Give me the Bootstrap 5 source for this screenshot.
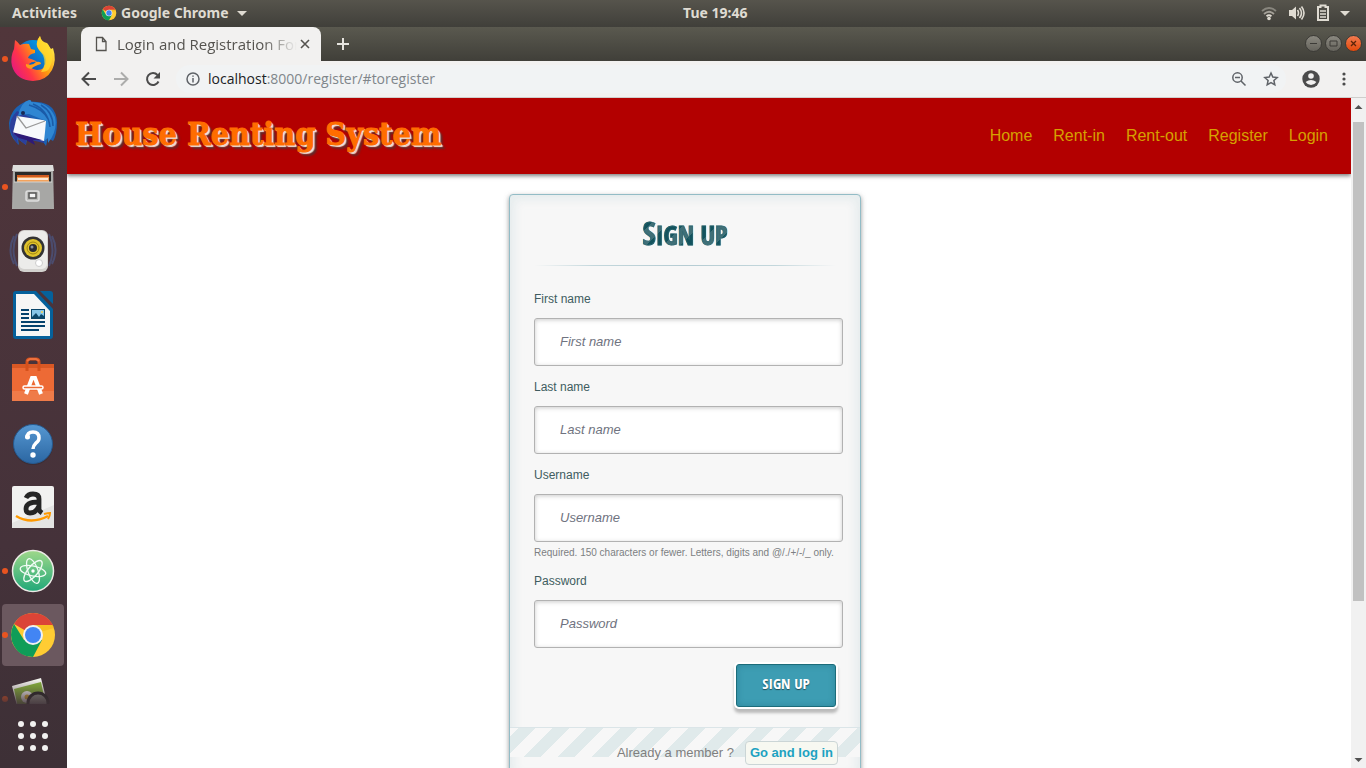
<!DOCTYPE html>
<html lang="en">
<head>
<meta charset="utf-8">
<meta name="viewport" content="width=device-width, initial-scale=1">
<title>Login and Registration Form</title>
<link rel="stylesheet" href="https://cdn.jsdelivr.net/npm/bootstrap@5.3.0/dist/css/bootstrap.min.css">
<style>
  body { font-family: "Liberation Sans", Arial, sans-serif; font-size: 13px; background: #fff; }
  svg { display: block; flex: none; }
  button { border: 0; padding: 0; background: none; color: inherit; }

  /* desktop panel */
  .panel-top { height: 27px; background: linear-gradient(#56544c, #403f3a); color: #dfdbd2; font: bold 14px/26px "Noto Sans", sans-serif; }
  .panel-top button { font: inherit; }
  .tray { gap: 11px; }
  .tri { border: 5px solid transparent; border-top-color: #dfdbd2; border-bottom: 0; }

  /* launcher */
  .launcher { width: 67px; background: linear-gradient(#51363b, #45323a 70%, #3d3036); }
  .launcher-list { flex: 1 1 0; min-height: 0; }
  .launcher-item { position: relative; width: 62px; height: 62px; margin: 1px 0 1px 2px; flex: none; border-radius: 4px; }
  .launcher-item.open { background: #6b585f; }
  .launcher-item.running::before { content: ""; position: absolute; left: 0; top: 28px; width: 6px; height: 6px; border-radius: 50%; background: #e95420; }
  .launcher-item.fading { -webkit-mask-image: linear-gradient(#000 12px, transparent 40px); mask-image: linear-gradient(#000 12px, transparent 40px); }

  /* browser window */
  .tabstrip { height: 34px; padding-left: 14px; background: linear-gradient(#5a594f, #403f39); }
  .tab-page { width: 240px; padding: 0 10px 0 12px; border-radius: 8px 8px 0 0; background: #f2f1f0; color: #55534f; font: 15px/34px "Open Sans", sans-serif; }
  .tab-name { -webkit-mask-image: linear-gradient(90deg, #000 145px, transparent 180px); mask-image: linear-gradient(90deg, #000 145px, transparent 180px); }
  .win-btns { gap: 3px; margin-right: 4px; }
  .win-btn { width: 17px; height: 17px; border-radius: 50%; background: linear-gradient(#8b8980, #65635c); border: 1px solid #3c3b37; }
  .win-btn.close-btn { background: linear-gradient(#f37b50, #e2490b); }
  .toolbar { height: 38px; padding: 0 14px 0 13px; background: #f2f1f0; border-bottom: 1px solid #cfcecc; color: #4b4b4b; }
  .nav-btns { gap: 15px; }
  .address { height: 28px; margin-left: 14px; padding: 0 7px 0 10px; border-radius: 14px; background: #f1f3f4; color: #80868b; font: 14px/28px "Open Sans", sans-serif; }
  .address b { font-weight: 400; color: #202124; }
  .scroller { width: 15px; background: #f1f1f1; }
  .scroller .track { flex: 1 1 0; padding: 8px 2px 0; }
  .scroller .thumb { height: 76%; background: #c1c1c1; }
  .scroller button { height: 16px; }

  /* site */
  .site-head { height: 76px; padding: 0 23px 0 8px; background: #b30000; box-shadow: 0 2px 4px rgba(0,0,0,.5); }
  .site-name { padding-bottom: 4px; font: bold 32px/60px "DejaVu Serif Condensed", "DejaVu Serif", serif; color: #ff6d00; -webkit-text-stroke: 1px #ff6d00; text-decoration: none; text-shadow: 1px 1px 0 #efe6da, 2px 2px 1px #efe6da, 4px 4px 2px rgba(60,60,60,.7); }
  .site-links { gap: 21px; font-size: 16px; }
  .site-links a { color: #d6a100; text-decoration: none; }
  .site-main { padding: 20px 48px 0 0; }
  .form-box { width: 352px; border: 1px solid #93bcc6; border-radius: 4px; background: #f7f7f7; box-shadow: 0 2px 5px rgba(105,108,109,.7), inset 0 0 8px 5px rgba(208,223,226,.4); }
  .form-box form { padding: 20px 17px 20px 24px; }
  .form-box h1 { margin: 0 7px 0 0; font: bold 26px/36px "Open Sans Condensed", sans-serif; text-transform: uppercase; }
  .form-box h1 span { display: inline-block; background: repeating-linear-gradient(135deg, #12535d 0 12px, #407078 12px 24px); -webkit-background-clip: text; background-clip: text; color: transparent; -webkit-text-stroke: 1px rgba(40,98,108,.6); }
  .form-box h1 span::first-letter { font-size: 32px; }
  .rule { height: 1px; margin: 12px 7px 24px 0; background: linear-gradient(90deg, transparent 0, #c3d7dc 20%, #b5ccd3 50%, #c3d7dc 80%, transparent 100%); }
  .field { margin-bottom: 12px; }
  .field label { display: block; margin-bottom: 10px; font-size: 12px; line-height: 18px; color: #405c60; }
  .field .form-control { height: 48px; padding: 0 25px; border: 1px solid #b2b2b2; border-radius: 3px; background: #fff; font-size: 13px; box-shadow: inset 0 1px 4px rgba(168,168,168,.6); }
  .field .form-control::placeholder { font-style: italic; color: #6f7380; }
  .hint { margin-top: 4px; font-size: 10px; line-height: 14px; color: #7c7f82; }
  .signup-btn { width: 100px; height: 43px; margin: 4px 7px 0 0; border: 1px solid #1c6c7a; border-radius: 3px; background: #3d9db3; color: #fff; font: bold 15px/36px "Open Sans Condensed", sans-serif; padding-bottom: 5px; text-shadow: 0 1px 1px rgba(0,0,0,.5); box-shadow: 0 0 0 2px #fff, 0 4px 3px 2px #bbb, inset 0 0 6px rgba(20,90,110,.35); }
  .form-foot { padding: 13px 22px 14px 0; border-top: 1px solid #dbe5e8; background: repeating-linear-gradient(135deg, #f7f7f7 0 6px, #e0eaeb 6px 18px, #f7f7f7 18px 24px) top / 100% 29px no-repeat; color: #7f7f7f; line-height: 22px; }
  .form-foot a { padding: 0 4px; margin-left: 11px; border: 1px solid #cbd5d6; border-radius: 4px; background: #f7f8f1; color: #1da2c1; font-weight: bold; text-decoration: none; }
</style>
</head>
<body class="d-flex flex-column vh-100 overflow-hidden">

<header class="panel-top d-flex align-items-center">
  <div class="w-50 ps-2 d-flex align-items-center">
    <button class="px-1">Activities</button>
    <button class="d-flex align-items-center ms-3 ps-1">
      <svg width="16" height="16" viewBox="0 0 48 48"><use href="#chrome"/></svg>
      <span class="mx-1">Google Chrome</span><span class="tri ms-1"></span>
    </button>
  </div>
  <time>Tue 19:46</time>
  <div class="tray flex-grow-1 pe-3 d-flex align-items-center justify-content-end">
    <svg width="16" height="16" viewBox="0 0 16 16" fill="none" stroke="#dfdbd2" stroke-width="1.8"><path d="M1 6q7-6 14 0" opacity=".4"/><path d="M3 9q5-4.500 10 0" opacity=".6"/><path d="M5.500 11.200q2.500-2 5 0"/><circle cx="8" cy="13.500" r="1.800" fill="#dfdbd2" stroke="none"/></svg>
    <svg width="18" height="16" viewBox="0 0 18 16" fill="none" stroke="#dfdbd2" stroke-width="1.600"><path d="M1 5h3l4-3.500v13L4 11H1z" fill="#dfdbd2" stroke="none"/><path d="M9.500 5q2 3 0 6M11.500 3q4 5 0 10M13.500 1.500q5 6.500 0 13"/></svg>
    <svg width="12" height="18" viewBox="0 0 12 18" fill="none" stroke="#dfdbd2" stroke-width="2"><path d="M1 3h2.500V1.500h5V3H11v13H1z"/><path d="M3 7h6M3 10h6M3 13h6" stroke-width="1.500"/></svg>
    <span class="tri"></span>
  </div>
</header>

<div class="d-flex flex-grow-1" style="min-height:0">
  <nav class="launcher d-flex flex-column flex-shrink-0" aria-label="Launcher">
    <div class="launcher-list overflow-hidden d-flex flex-column">
      <button class="launcher-item running d-flex align-items-center justify-content-center" aria-label="Firefox">
        <svg width="48" height="48" viewBox="0 0 48 48"><defs><linearGradient id="fx" x1="0" y1=".8" x2="1" y2=".2"><stop offset="0" stop-color="#e31587"/><stop offset=".3" stop-color="#ff3647"/><stop offset=".6" stop-color="#ff980e"/><stop offset="1" stop-color="#fff44f"/></linearGradient><linearGradient id="fb" x1="1" y1="0" x2="0" y2="1"><stop offset="0" stop-color="#00b3f4"/><stop offset="1" stop-color="#1a2a9c"/></linearGradient></defs>
          <circle cx="24" cy="23" r="18" fill="url(#fb)"/><path d="M6 5q3 2 5 5 5-2 9-1l2 5 4 1 0 3q-6 1-7 5 7 2 9 4-5-1-8 2 1 5 8 6 9 0 9-10-1-6-7-10Q25 9 31 1q1 6 7 7l4 6 2-1q4 12-1 22-6 11-19 11Q7 45 3 31 1 22 5 14z" fill="url(#fx)"/><path d="M31 1q1 6 8 8 8 13 1 25-2 3-8 3 6-8 2-17-7-8-6-12 0-4 3-7" fill="#ffdc2e" opacity=".75"/><path d="M17 29q7 2 10-2 5-1 5 2-7 2-10 5-6-1-5-5" fill="#ff9b1a"/></svg>
      </button>
      <button class="launcher-item d-flex align-items-center justify-content-center" aria-label="Thunderbird">
        <svg width="48" height="48" viewBox="0 0 48 48"><path d="M18 2Q2 8 0 24q0 13 8 20l2 2-1-6 8 6 1-6 14 0 5 7 2-8 5 3q4-6 4-19Q47 4 28 3z" fill="#1b62b4"/><path d="M8 12Q0 20 1 30l3 8 5 8-1-7 9 7 0-6 18 4 2-18z" fill="#2c3f9c"/><path d="M8 17L40 22q1 9-5 20L4 34z" fill="#f7f9fb"/><path d="M8 17l9 12 19-7" fill="none" stroke="#999" stroke-width="1.300"/><path d="M9 17q3-14 11-16 3 0 2 2 18 0 24 15 3 14-7 26l0-5-4 3 1-9 1-11-17-7q-7 0-11 2" fill="#2f86d2"/><path d="M24 5q15 6 17 23M32 6q12 7 12 21M20 6q14 4 19 14" stroke="#1a5ba8" stroke-width="1.500" fill="none"/><circle cx="14" cy="14" r="2" fill="#182a55"/><path d="M3 33l30 8-9 0 2 5-9-5-7-2z" fill="#2e1a78"/></svg>
      </button>
      <button class="launcher-item running d-flex align-items-center justify-content-center" aria-label="Files">
        <svg width="48" height="48" viewBox="0 0 48 48"><path d="M4 2h40l1 44H3z" fill="#a9a9a7"/><path d="M4 2h40l1 6H3z" fill="#dededc"/><path d="M6 9h36v12H6z" fill="#2b2a29"/><path d="M8 12h32v9H8z" fill="#d05b20"/><path d="M8 14h32v7H8z" fill="#f3a25c"/><path d="M9 16h30" stroke="#fff" stroke-width="1.500"/><path d="M5 19h38v26H5z" fill="#a7a7a5"/><path d="M5 19h38" stroke="#d3d3d1"/><rect x="17" y="28" width="13" height="10" rx="2" fill="#b8b8b6" stroke="#ddd" stroke-width="1.500"/><rect x="20" y="30" width="7" height="5" fill="#f3f3f3" stroke="#555" stroke-width="1.500"/></svg>
      </button>
      <button class="launcher-item d-flex align-items-center justify-content-center" aria-label="Rhythmbox">
        <svg width="48" height="48" viewBox="0 0 48 48"><path d="M5 9q-7 14 0 28M8 7q-7 16 0 32M43 9q7 14 0 28M40 7q7 16 0 32" fill="none" stroke="#4c5785" stroke-width="2" opacity=".7"/><rect x="9" y="3" width="30" height="42" rx="6" fill="#d2d1ce"/><rect x="10" y="4" width="28" height="38" rx="5" fill="#ececea"/><circle cx="24" cy="21" r="11.500" fill="#333"/><circle cx="24" cy="21" r="9" fill="#dfc22b"/><circle cx="24" cy="21" r="6" fill="none" stroke="#9f8512" stroke-width="1"/><circle cx="24" cy="21" r="4" fill="#2b2c31"/><circle cx="23" cy="20" r="1.500" fill="#8b949e"/><circle cx="30" cy="36" r="3.500" fill="#fff" stroke="#ccc"/></svg>
      </button>
      <button class="launcher-item d-flex align-items-center justify-content-center" aria-label="LibreOffice Writer">
        <svg width="48" height="48" viewBox="0 0 48 48"><path d="M7 0h20l17 18v27q0 3-3 3H7q-3 0-3-3V3q0-3 3-3M31 0h10q3 0 3 3v10z" fill="#05619b"/><path d="M7 3h18l16 17v25H7z" fill="#f6f6f5"/><path d="M12 19h8M12 23h8M12 27h8M12 31h24M12 35h24M12 39h18" stroke="#05426c" stroke-width="2"/><path d="M22 18h14v10H22z" fill="#0b4568"/><path d="M23 19h12v6l-3-2-2 3-3-4-4 4z" fill="#86c5e8"/><circle cx="33" cy="21" r="1" fill="#ffd34d"/></svg>
      </button>
      <button class="launcher-item d-flex align-items-center justify-content-center" aria-label="Ubuntu Software">
        <svg width="48" height="48" viewBox="0 0 48 48"><path d="M3 9h42v37H3z" fill="#ed6a35"/><path d="M3 36h42v10H3z" fill="#ef7b49"/><path d="M3 9h42v4H3z" fill="#d95824"/><path d="M18 16V7q0-3 3-3h6q3 0 3 3v9" fill="none" stroke="#d5511c" stroke-width="3"/><path d="M18 6l3-2h6l3 2" fill="none" stroke="#ee713e" stroke-width="2"/><path d="M17 39l6-16h3l6 16" fill="none" stroke="#fff" stroke-width="4"/><rect x="14" y="31" width="20" height="3" rx="1.500" fill="#ed6a35" stroke="#fff" stroke-width="1.500"/></svg>
      </button>
      <button class="launcher-item d-flex align-items-center justify-content-center" aria-label="Help">
        <svg width="48" height="48" viewBox="0 0 48 48"><defs><linearGradient id="hp" x2="0" y2="1"><stop offset="0" stop-color="#5698d2"/><stop offset="1" stop-color="#2b66a2"/></linearGradient></defs><circle cx="24" cy="26" r="20" fill="#33272e" opacity=".5"/><circle cx="24" cy="25" r="19.500" fill="url(#hp)" stroke="#26598e"/><path d="M18 19q0-6 6-6 6 0 6 6 0 3-3 5-3 3-3 6" fill="none" stroke="#fff" stroke-width="3.500"/><circle cx="18.500" cy="18" r="2.500" fill="#fff"/><circle cx="24" cy="36" r="2.700" fill="#fff"/></svg>
      </button>
      <button class="launcher-item d-flex align-items-center justify-content-center" aria-label="Amazon">
        <svg width="48" height="48" viewBox="0 0 48 48"><rect x="3" y="3" width="42" height="42" rx="2" fill="#f1f1f0"/><path d="M3 40L45 22V45H3z" fill="#e4e4e3"/><path d="M17 15q2-4 7-4 6 0 6 5v10q0 2 3 4M30 19q-13 0-13 7 0 4 4 4 6 0 9-7" fill="none" stroke="#252525" stroke-width="4.800"/><path d="M7 33q15 9 32 0" fill="none" stroke="#ff9900" stroke-width="2.500"/><path d="M35 31q4-1 6-1 0 3-2 6" fill="none" stroke="#ff9900" stroke-width="2"/></svg>
      </button>
      <button class="launcher-item running d-flex align-items-center justify-content-center" aria-label="Atom">
        <svg width="48" height="48" viewBox="0 0 48 48"><defs><linearGradient id="at" x2="0" y2="1"><stop offset="0" stop-color="#9fd88a"/><stop offset="1" stop-color="#20a878"/></linearGradient></defs><circle cx="24" cy="24" r="20.500" fill="url(#at)" stroke="#eceae6" stroke-width="1.500"/><g fill="none" stroke="#f1fbf5" stroke-width="1.300"><ellipse cx="24" cy="24" rx="13" ry="5" transform="rotate(12 24 24)"/><ellipse cx="24" cy="24" rx="13" ry="5" transform="rotate(70 24 24)"/><ellipse cx="24" cy="24" rx="13" ry="5" transform="rotate(130 24 24)"/></g><circle cx="24" cy="24" r="1.700" fill="#fff"/></svg>
      </button>
      <button class="launcher-item running open d-flex align-items-center justify-content-center" aria-label="Google Chrome">
        <svg width="48" height="48" viewBox="0 0 48 48"><g id="chrome"><circle cx="24" cy="24" r="22" fill="#fc3"/><path d="M24 24L5 13Q11 2 24 2q13 0 20 12H24z" fill="#db4437"/><path d="M5 13q-6 11 0 22 6 11 19 11l9-17-9-5-9 5z" fill="#0f9d58"/><path d="M24 14h20l1 3-14 4z" fill="#e8a900" opacity=".35"/><circle cx="24" cy="24" r="10" fill="#f1f1f1"/><circle cx="24" cy="24" r="8" fill="#4285f4"/></g></svg>
      </button>
      <button class="launcher-item running fading d-flex align-items-center justify-content-center" aria-label="Image Viewer">
        <svg width="48" height="48" viewBox="0 0 48 48"><path d="M3 11l29-8 6 24-29 8z" fill="#f1f1ec"/><path d="M5 14l27-7 4 19-27 7z" fill="#86b23c"/><circle cx="18" cy="22" r="6" fill="#fff"/><circle cx="18" cy="22" r="2.500" fill="#e6b52a"/><circle cx="29" cy="28" r="10" fill="#8e9288" stroke="#222" stroke-width="3"/></svg>
      </button>
    </div>
    <button class="launcher-item d-flex align-items-center justify-content-center" aria-label="Show Applications">
      <svg width="32" height="32" viewBox="0 0 32 32" fill="#f2f1f0"><circle cx="4" cy="4" r="3"/><circle cx="16" cy="4" r="3"/><circle cx="28" cy="4" r="3"/><circle cx="4" cy="16" r="3"/><circle cx="16" cy="16" r="3"/><circle cx="28" cy="16" r="3"/><circle cx="4" cy="28" r="3"/><circle cx="16" cy="28" r="3"/><circle cx="28" cy="28" r="3"/></svg>
    </button>
  </nav>

  <div class="d-flex flex-column flex-grow-1" style="min-width:0">
    <div class="tabstrip d-flex align-items-center">
      <div class="tab-page d-flex align-items-center">
        <svg width="16" height="16" viewBox="0 0 16 16" fill="none" stroke="#55534f" stroke-width="1.300"><path d="M3.500 1.500h6l3.500 4v9H3.500zM9.500 1.500V5.500H13"/></svg>
        <span class="tab-name flex-grow-1 ms-2 text-nowrap overflow-hidden">Login and Registration Form</span>
        <button aria-label="Close tab"><svg width="12" height="12" viewBox="0 0 12 12" stroke="#55534f" stroke-width="1.600"><path d="M2 2l8 8M10 2l-8 8"/></svg></button>
      </div>
      <button class="ms-3" aria-label="New tab"><svg width="12" height="12" viewBox="0 0 12 12" stroke="#e6e4df" stroke-width="2"><path d="M6 0v12M0 6h12"/></svg></button>
      <div class="win-btns ms-auto d-flex">
        <button class="win-btn" aria-label="Minimize"><svg width="15" height="15" viewBox="0 0 15 15" stroke="#3c3b37"><path d="M4 7.500h7"/></svg></button>
        <button class="win-btn" aria-label="Maximize"><svg width="15" height="15" viewBox="0 0 15 15" fill="none" stroke="#3c3b37"><path d="M4 5h7v5H4z"/></svg></button>
        <button class="win-btn close-btn" aria-label="Close"><svg width="15" height="15" viewBox="0 0 15 15" stroke="#5b2409" stroke-width="1.300"><path d="M5 5l5 5M10 5l-5 5"/></svg></button>
      </div>
    </div>

    <div class="toolbar d-flex align-items-center">
      <div class="nav-btns d-flex">
        <button aria-label="Back"><svg width="18" height="18" viewBox="0 0 18 18" fill="none" stroke="#4b4b4b" stroke-width="2"><path d="M16 9H3M9 2.500L2.500 9 9 15.500"/></svg></button>
        <button aria-label="Forward"><svg width="16" height="18" viewBox="0 0 16 18" fill="none" stroke="#acacab" stroke-width="2"><path d="M1 9h13M8 2.500L14.500 9 8 15.500"/></svg></button>
        <button aria-label="Reload"><svg width="18" height="18" viewBox="0 0 18 18"><path d="M14.500 11.500A6 6 0 1 1 13.500 5" fill="none" stroke="#4b4b4b" stroke-width="2"/><path d="M16 2v6.500H9.500z" fill="#4b4b4b"/></svg></button>
      </div>
      <div class="address d-flex align-items-center flex-grow-1">
        <svg width="14" height="14" viewBox="0 0 14 14" fill="none" stroke="#5f6368" stroke-width="1.500"><circle cx="7" cy="7" r="6"/><path d="M7 6v4.500M7 3.500v1.300"/></svg>
        <div class="ms-2 flex-grow-1" role="textbox" contenteditable="true" spellcheck="false" aria-label="Address"><b>localhost</b>:8000/register/#toregister</div>
        <button aria-label="Zoom"><svg width="16" height="16" viewBox="0 0 16 16" fill="none" stroke="#5f6368" stroke-width="1.500"><circle cx="6.500" cy="6.500" r="4.700"/><path d="M10 10l4.500 4.500M4 6.500h5"/></svg></button>
        <button class="ms-3" aria-label="Bookmark"><svg width="16" height="16" viewBox="0 0 16 16" fill="none" stroke="#5f6368" stroke-width="1.500"><path d="M8 2l1.800 4 4.400.5-3.300 3 .9 4.300L8 11.600l-3.800 2.200.9-4.300-3.300-3L6.200 6z"/></svg></button>
      </div>
      <button class="mx-3" aria-label="Profile"><svg width="18" height="18" viewBox="0 0 18 18"><circle cx="9" cy="9" r="8.700" fill="#4b4b4b"/><circle cx="9" cy="6" r="2.800" fill="#f2f1f0"/><path d="M3.600 12q5.400-4 10.800 0-2 3-5.400 3t-5.400-3" fill="#f2f1f0"/></svg></button>
      <button aria-label="Menu"><svg width="16" height="16" viewBox="0 0 16 16" fill="#4b4b4b"><circle cx="8" cy="3" r="1.600"/><circle cx="8" cy="8" r="1.600"/><circle cx="8" cy="13" r="1.600"/></svg></button>
    </div>

    <div class="d-flex flex-grow-1" style="min-height:0">
      <div class="flex-grow-1 overflow-hidden">
        <header class="site-head d-flex align-items-center justify-content-between">
          <a class="site-name" href="#">House Renting System</a>
          <nav class="site-links d-flex" aria-label="Main"><a href="#">Home</a><a href="#">Rent-in</a><a href="#">Rent-out</a><a href="#">Register</a><a href="#">Login</a></nav>
        </header>
        <main class="site-main d-flex justify-content-center">
          <section class="form-box">
            <form class="d-flex flex-column">
              <h1 class="text-center"><span>Sign up</span></h1>
              <div class="rule"></div>
              <div class="field"><label for="first">First name</label><input class="form-control" id="first" type="text" placeholder="First name"></div>
              <div class="field"><label for="last">Last name</label><input class="form-control" id="last" type="text" placeholder="Last name"></div>
              <div class="field"><label for="user">Username</label><input class="form-control" id="user" type="text" placeholder="Username" aria-describedby="user-hint"><div class="hint" id="user-hint">Required. 150 characters or fewer. Letters, digits and @/./+/-/_ only.</div></div>
              <div class="field"><label for="pass">Password</label><input class="form-control" id="pass" type="password" placeholder="Password"></div>
              <button class="signup-btn align-self-end" type="submit">SIGN UP</button>
            </form>
            <div class="form-foot d-flex justify-content-end align-items-center"><span>Already a member ?</span><a href="#tologin">Go and log in</a></div>
          </section>
        </main>
      </div>
      <div class="scroller d-flex flex-column" aria-hidden="true">
        <button tabindex="-1"><svg width="15" height="16" viewBox="0 0 15 16"><path d="M7.500 7L11.500 11h-8z" fill="#505050"/></svg></button>
        <div class="track"><div class="thumb"></div></div>
        <button tabindex="-1"><svg width="15" height="16" viewBox="0 0 15 16"><path d="M7.500 10L3.500 6h8z" fill="#505050"/></svg></button>
      </div>
    </div>
  </div>
</div>
<script src="https://cdn.jsdelivr.net/npm/bootstrap@5.3.0/dist/js/bootstrap.bundle.min.js"></script>
</body>
</html>
